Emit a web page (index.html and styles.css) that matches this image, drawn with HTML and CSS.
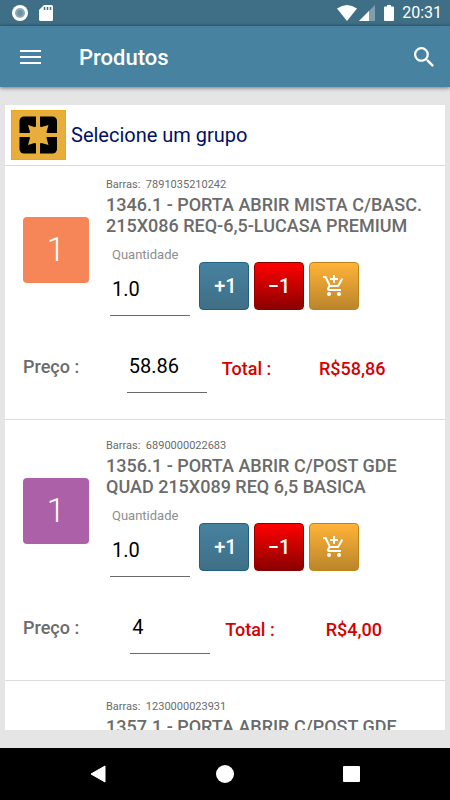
FILE: index.html
```html
<!DOCTYPE html>
<html lang="pt-BR">
<head>
    <meta charset="UTF-8">
    <meta name="viewport" content="width=device-width, initial-scale=1">
    <title>Produtos</title>
    <link rel="stylesheet" href="styles.css">
</head>
<body>
    <div class="status-bar">
        <svg class="status-icon" width="18" height="18" viewBox="0 0 18 18">
            <circle cx="9" cy="9" r="8" fill="#fff"/>
            <circle cx="9" cy="9" r="5" fill="#8fabb9"/>
            <circle cx="9" cy="9" r="3" fill="#6f94a6"/>
        </svg>
        <svg class="status-icon" width="14" height="16" viewBox="0 0 14 16">
            <path d="M5 0h7.500q1.500 0 1.500 1.500v13q0 1.500-1.500 1.500h-11q-1.500 0-1.500-1.500V5z" fill="#fff"/>
            <path d="M5.500 2v3M8.500 2v3M11.500 2v3" stroke="#3f6e85" stroke-width="1.500"/>
        </svg>
        <span class="status-space"></span>
        <svg width="20" height="16" viewBox="0 0 20 16">
            <path d="M0 3.500Q10-3.500 20 3.500L10 16z" fill="#fff"/>
        </svg>
        <svg class="signal" width="16" height="16" viewBox="0 0 16 16">
            <path d="M16 0v16H0z" fill="#7f9fae"/>
            <path d="M10 6v10H0z" fill="#fff"/>
        </svg>
        <svg class="battery" width="10" height="16" viewBox="0 0 10 16">
            <path d="M3 0h4v1.500h2q1 0 1 1V15q0 1-1 1H1q-1 0-1-1V2.500q0-1 1-1h2z" fill="#fff"/>
        </svg>
        <span class="clock">20:31</span>
    </div>

    <header class="app-bar">
        <button class="icon-button" type="button" aria-label="Menu">
            <svg width="22" height="16" viewBox="0 0 22 16">
                <path d="M0 2h21M0 8h21M0 14h21" stroke="#fff" stroke-width="2"/>
            </svg>
        </button>
        <h1 class="app-title">Produtos</h1>
        <button class="icon-button" type="button" aria-label="Buscar">
            <svg width="20" height="20" viewBox="3 3 17.500 17.500">
                <path fill="#fff" d="M15.500 14h-.79l-.28-.27A6.471 6.471 0 0 0 16 9.500 6.500 6.500 0 1 0 9.500 16c1.610 0 3.090-.59 4.230-1.570l.27.28v.79l5 4.990L20.490 19l-4.990-5zm-6 0C7.010 14 5 11.990 5 9.500S7.010 5 9.500 5 14 7.010 14 9.500 11.990 14 9.500 14z"/>
            </svg>
        </button>
    </header>

    <main class="panel">
        <button class="group-picker" type="button">
            <svg width="55" height="50" viewBox="0 0 55 50">
                <rect width="55" height="50" fill="#e8a820"/>
                <rect x="1" y="1" width="53" height="48" fill="#e8ae3c"/>
                <rect x="8.500" y="6.500" width="37.500" height="37" rx="4.500" fill="#000"/>
                <path d="M27 6v38M8 25h38" stroke="#e8ae3c" stroke-width="4"/>
                <path d="M17 15l6.500 2 3.500-1 3.500 1 7-2-2 7 1 3-1 3 2 7-7-2-3.500 1-3.500-1-6.500 2 2-7-1.500-3 1.500-3z" fill="#e8ae3c"/>
            </svg>
            Selecione um grupo
        </button>

        <div class="product-list">
            <article class="product">
                <div class="product-main">
                    <div class="badge badge-orange">1</div>
                    <div class="details">
                        <p class="barcode">Barras:&nbsp; 7891035210242</p>
                        <h2 class="name">1346.1 - PORTA ABRIR MISTA C/BASC. 215X086 REQ-6,5-LUCASA PREMIUM</h2>
                        <div class="controls">
                            <div class="quantity">
                                <label for="qty-1">Quantidade</label>
                                <input class="field" id="qty-1" type="text" value="1.0">
                            </div>
                            <button class="action action-plus" type="button">+1</button>
                            <button class="action action-minus" type="button">−1</button>
                            <button class="action action-cart" type="button" aria-label="Adicionar ao carrinho">
                                <svg width="24" height="24" viewBox="0 0 24 24">
                                    <path fill="#fff" d="M11 9h2V6h3V4h-3V1h-2v3H8v2h3v3zm-4 9c-1.100 0-1.990.9-1.990 2S5.900 22 7 22s2-.9 2-2-.9-2-2-2zm10 0c-1.100 0-1.990.9-1.990 2s.89 2 1.990 2 2-.9 2-2-.9-2-2-2zm-9.830-3.250l.03-.12.9-1.630h7.450c.75 0 1.410-.41 1.750-1.030l3.860-7.010L19.420 4h-.01l-1.100 2-2.760 5H8.530l-.13-.27L6.160 6l-.95-2-.94-2H1v2h2l3.600 7.590-1.350 2.450c-.16.28-.25.61-.25.96 0 1.100.9 2 2 2h12v-2H7.420c-.13 0-.25-.11-.25-.25z"/>
                                </svg>
                            </button>
                        </div>
                    </div>
                </div>
                <div class="price-row">
                    <label class="price-label" for="price-1">Preço :</label>
                    <input class="field" id="price-1" type="text" value="58.86">
                    <span class="total total-label">Total :</span>
                    <span class="total">R$58,86</span>
                </div>
            </article>

            <article class="product">
                <div class="product-main">
                    <div class="badge badge-purple">1</div>
                    <div class="details">
                        <p class="barcode">Barras:&nbsp; 6890000022683</p>
                        <h2 class="name">1356.1 - PORTA ABRIR C/POST GDE QUAD 215X089 REQ 6,5 BASICA</h2>
                        <div class="controls">
                            <div class="quantity">
                                <label for="qty-2">Quantidade</label>
                                <input class="field" id="qty-2" type="text" value="1.0">
                            </div>
                            <button class="action action-plus" type="button">+1</button>
                            <button class="action action-minus" type="button">−1</button>
                            <button class="action action-cart" type="button" aria-label="Adicionar ao carrinho">
                                <svg width="24" height="24" viewBox="0 0 24 24">
                                    <path fill="#fff" d="M11 9h2V6h3V4h-3V1h-2v3H8v2h3v3zm-4 9c-1.100 0-1.990.9-1.990 2S5.900 22 7 22s2-.9 2-2-.9-2-2-2zm10 0c-1.100 0-1.990.9-1.990 2s.89 2 1.990 2 2-.9 2-2-.9-2-2-2zm-9.830-3.250l.03-.12.9-1.630h7.450c.75 0 1.410-.41 1.750-1.030l3.860-7.010L19.420 4h-.01l-1.100 2-2.760 5H8.530l-.13-.27L6.160 6l-.95-2-.94-2H1v2h2l3.600 7.590-1.350 2.450c-.16.28-.25.61-.25.96 0 1.100.9 2 2 2h12v-2H7.420c-.13 0-.25-.11-.25-.25z"/>
                                </svg>
                            </button>
                        </div>
                    </div>
                </div>
                <div class="price-row">
                    <label class="price-label" for="price-2">Preço :</label>
                    <input class="field" id="price-2" type="text" value="4">
                    <span class="total total-label">Total :</span>
                    <span class="total">R$4,00</span>
                </div>
            </article>

            <article class="product">
                <div class="product-main">
                    <div></div>
                    <div class="details">
                        <p class="barcode">Barras:&nbsp; 1230000023931</p>
                        <h2 class="name">1357.1 - PORTA ABRIR C/POST GDE</h2>
                    </div>
                </div>
            </article>
        </div>
    </main>

    <nav class="nav-bar">
        <button type="button" aria-label="Voltar">
            <svg width="18" height="18" viewBox="0 0 18 18">
                <path d="M16 1v16L2 9z" fill="#fff" stroke="#fff" stroke-width="1" stroke-linejoin="round"/>
            </svg>
        </button>
        <button type="button" aria-label="Início">
            <svg width="18" height="18" viewBox="0 0 18 18">
                <circle cx="9" cy="9" r="9" fill="#fff"/>
            </svg>
        </button>
        <button type="button" aria-label="Recentes">
            <svg width="18" height="18" viewBox="0 0 18 18">
                <rect x="0" y="1" width="17" height="16" rx="1" fill="#fff"/>
            </svg>
        </button>
    </nav>
</body>
</html>
```

FILE: styles.css
```css
* {
    box-sizing: border-box;
}

body {
    margin: 0;
    height: 100vh;
    display: flex;
    flex-direction: column;
    overflow: hidden;
    background: #e5e5e5;
    color: #6b6b6b;
    font-family: Roboto, "Liberation Sans", sans-serif;
}

button,
input {
    font-family: inherit;
    border: 0;
    border-radius: 0;
    background: none;
}

button {
    padding: 0;
    display: flex;
    align-items: center;
    justify-content: center;
}

svg {
    display: block;
    flex: none;
}

/* barra de status */
.status-bar {
    flex: none;
    height: 26px;
    padding: 0 8px 0 11px;
    display: flex;
    align-items: center;
    background: linear-gradient(#3f6f86 23px, #3a667b);
    color: #fff;
}

.status-icon {
    margin-right: 10px;
}

.status-space {
    flex: 1;
}

.signal {
    margin-left: 2px;
}

.battery {
    margin: 0 8px 0 9px;
}

.clock {
    font-size: 16px;
    line-height: 28px;
}

/* barra do app */
.app-bar {
    flex: none;
    height: 61px;
    padding: 0 16px 0 20px;
    display: flex;
    align-items: center;
    background: #4782a0;
    box-shadow: 0 1px 4px rgba(0, 0, 0, 0.5);
}

.app-title {
    flex: 1;
    margin: 2px 0 0 37px;
    color: #fff;
    font-size: 22px;
    font-weight: 500;
    line-height: 28px;
}

/* painel */
.panel {
    flex: 1;
    min-height: 0;
    margin: 18px 5px;
    display: flex;
    flex-direction: column;
    background: #fff;
}

.group-picker {
    flex: none;
    justify-content: flex-start;
    gap: 5px;
    padding: 5px 6px;
    border-bottom: 1px solid #dcdcdc;
    color: #001064;
    font-size: 20px;
}

.product-list {
    flex: 1;
    min-height: 0;
    overflow: hidden;
}

.product {
    padding: 18px 9px 26px 18px;
    border-bottom: 1px solid #dcdcdc;
}

.product:first-child {
    padding-top: 11px;
}

.product-main {
    display: grid;
    grid-template-columns: 66px 1fr;
    column-gap: 17px;
    align-items: center;
}

.badge {
    height: 66px;
    border-radius: 4px;
    color: #fff;
    font-size: 33px;
    font-weight: 300;
    line-height: 66px;
    text-align: center;
}

.badge-orange {
    background: #f68558;
}

.badge-purple {
    background: #ab60a7;
}

.barcode {
    margin: 0 0 2px;
    font-size: 11px;
    line-height: 15px;
}

.name {
    margin: 0;
    font-size: 18px;
    font-weight: 500;
    line-height: 21px;
}

.controls {
    display: flex;
    align-items: center;
    gap: 5px;
    padding: 11px 0 7px 4px;
}

.quantity {
    margin-right: 4px;
}

.quantity label {
    display: block;
    padding-left: 2px;
    color: #8e8e8e;
    font-size: 13px;
    line-height: 16px;
}

.field {
    display: block;
    flex: none;
    width: 80px;
    height: 53px;
    padding: 0 2px;
    border-bottom: 1px solid #6b6b6b;
    color: #000;
    font-size: 20px;
}

.action {
    width: 50px;
    height: 48px;
    margin-top: 9px;
    border: 1px solid;
    border-radius: 4px;
    color: #fff;
    font-size: 20px;
    font-weight: 500;
}

.action-plus {
    padding-left: 3px;
    background: linear-gradient(#4782a0, #3f6f86);
    border-color: #1f6280;
}

.action-minus {
    background: linear-gradient(#ff0000, #8b0000);
    border-color: #8b0000;
}

.action-cart {
    background: linear-gradient(#ffb338, #bb852b);
    border-color: #c08416;
}

.price-row {
    display: flex;
    align-items: center;
    margin-top: 17px;
    padding-right: 3px;
    font-size: 18px;
    font-weight: 500;
}

.price-label,
.total {
    flex: 1 0 auto;
}

.total {
    padding-top: 4px;
    color: #d50000;
}

.total-label {
    margin-left: 15px;
}

/* navegação do sistema */
.nav-bar {
    flex: none;
    height: 52px;
    padding: 0 35px;
    display: grid;
    grid-template-columns: repeat(3, 1fr);
    background: #000;
}
```
